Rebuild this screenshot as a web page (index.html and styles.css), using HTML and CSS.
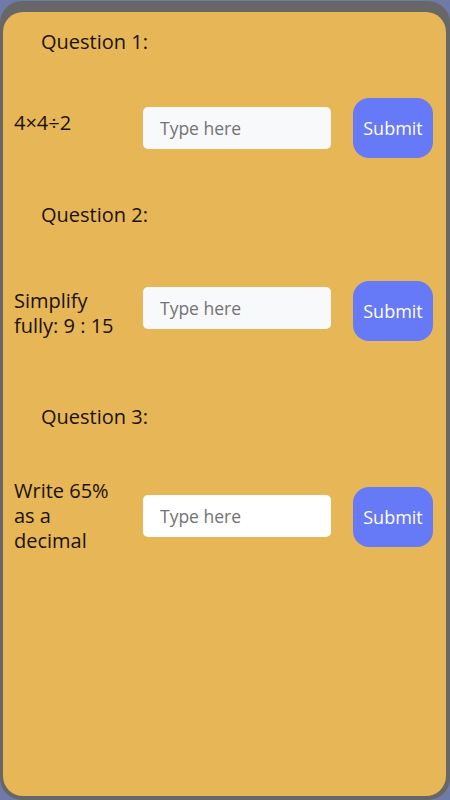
FILE: index.html
```html
<!DOCTYPE html>
<html>
<head>
<meta charset="utf-8">
<link rel="stylesheet" href="styles.css">
</head>
<body>
<div class="frame">
  <div class="card">
    <div class="label q1">Question 1:</div>
    <div class="row r1">
      <div class="prompt">4×4÷2</div>
      <input class="field" type="text" placeholder="Type here">
      <button class="submit">Submit</button>
    </div>
    <div class="label q2">Question 2:</div>
    <div class="row r2">
      <div class="prompt">Simplify fully: 9 : 15</div>
      <input class="field" type="text" placeholder="Type here">
      <button class="submit">Submit</button>
    </div>
    <div class="label q3">Question 3:</div>
    <div class="row r3">
      <div class="prompt">Write 65% as a decimal</div>
      <input class="field white" type="text" placeholder="Type here">
      <button class="submit">Submit</button>
    </div>
  </div>
</div>
</body>
</html>
```

FILE: styles.css
```css
html, body {
  margin: 0;
  padding: 0;
  background: #6f7aa8;
}
body {
  font-family: "Open Sans", "Noto Sans", sans-serif;
  color: #1a1208;
}
.frame {
  margin-top: 1px;
  height: 799px;
  box-sizing: border-box;
  background: #676767;
  border-radius: 22px;
  padding: 11px 4px 4px 3px;
}
.card {
  height: 100%;
  box-sizing: border-box;
  background: #e7b656;
  border-radius: 20px;
  padding: 16px 0 0 11px;
}
.label {
  font-size: 20px;
  line-height: 28px;
  margin-left: 27px;
}
.q2 { margin-top: 43px; }
.q3 { margin-top: 62px; }
.row {
  display: flex;
  align-items: center;
}
.r1 { margin-top: 42px; height: 60px; }
.r2 { margin-top: 52px; height: 60px; }
.r3 { margin-top: 47px; height: 75px; }
.prompt {
  width: 106px;
  margin-right: 23px;
  font-size: 20px;
  line-height: 25px;
}
.r1 .prompt { margin-bottom: 12px; }
.r2 .prompt { margin-top: 4px; }
.field {
  width: 188px;
  height: 42px;
  box-sizing: border-box;
  border: none;
  border-radius: 5px;
  background: #f8f9fb;
  padding: 0 0 0 17px;
  font-family: "Open Sans", "Noto Sans", sans-serif;
  font-size: 17.5px;
  color: #333;
  outline: none;
}
.r2 .field { margin-top: -6px; }
.field.white { background: #ffffff; }
.field::placeholder { color: #737373; }
.submit {
  margin-left: 22px;
  width: 80px;
  height: 60px;
  border: none;
  border-radius: 16px;
  background: #6679f6;
  color: #ffffff;
  font-family: "Open Sans", "Noto Sans", sans-serif;
  font-size: 18px;
  padding: 0;
}
.r3 .submit { margin-top: 3px; }
```
